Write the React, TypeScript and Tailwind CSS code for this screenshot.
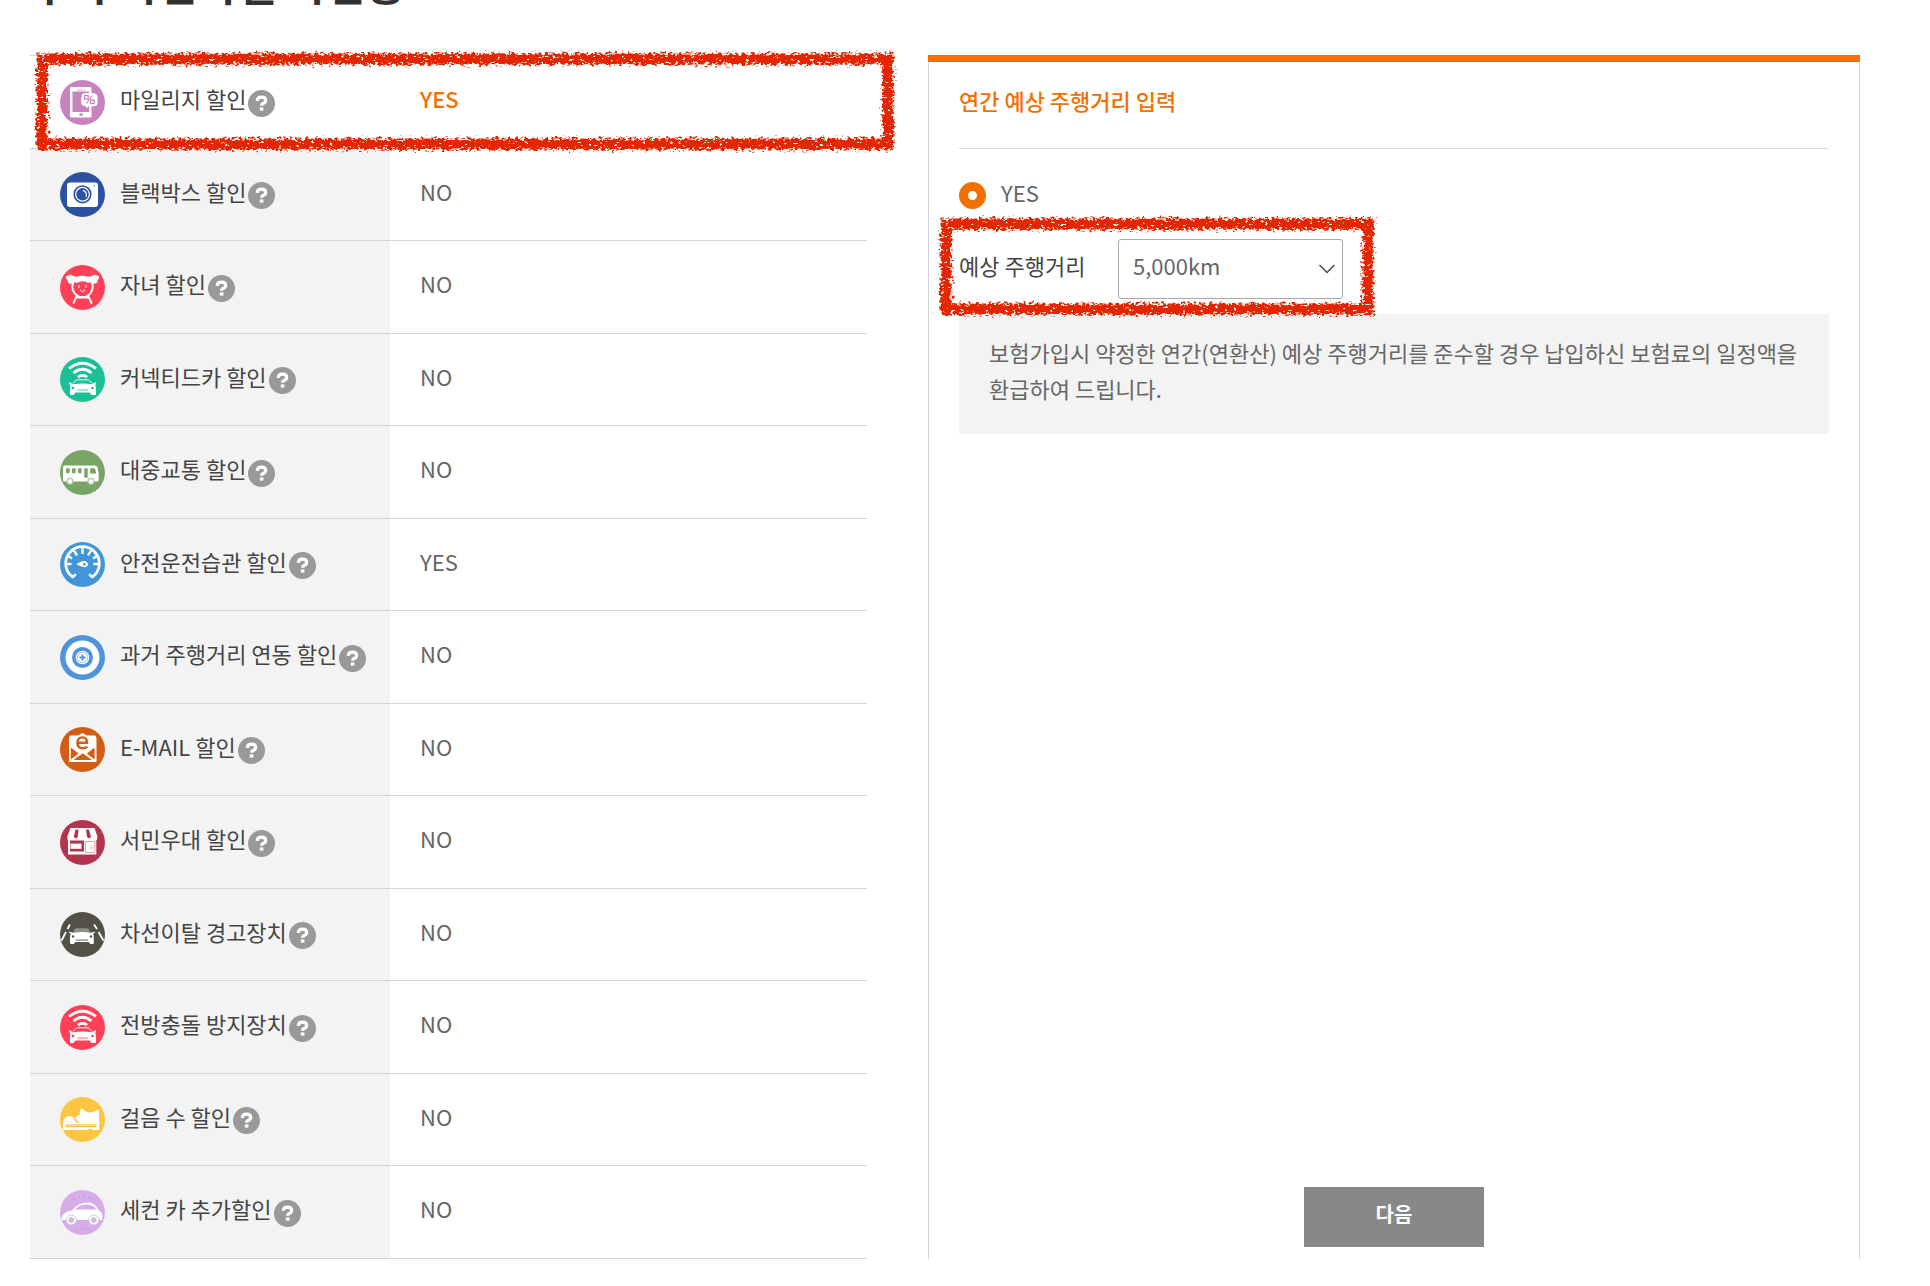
import { useId, useState } from "react";
import type { ReactNode } from "react";
import { ChevronDown } from "lucide-react";

type Discount = {
  key: string;
  label: string;
  value: "YES" | "NO";
  icon: ReactNode;
};

// front view of a car, shared by a few of the badges
const CarFront = ({ fill, bg }: { fill: string; bg: string }) => (
  <>
    <path d="M13 26.5 L15.8 23.4 Q16.4 22.8 17.4 22.8 H27.6 Q28.6 22.8 29.2 23.4 L32 26.5" fill="none" stroke={fill} strokeWidth="1" />
    <path d="M9.5 25 L13 27.2 Q22.5 25.6 32 27.2 L35.5 25 L36 27 L35 28 Q36 29 36 31 V37 Q36 38 35 38 H32 Q31 38 30.6 37 L29.8 35.4 H15.2 L14.4 37 Q14 38 13 38 H11 Q10 38 10 37 V31 Q10 29 10.5 28 L9 27Z" fill={fill} />
    <circle cx="13" cy="31" r="1.3" fill={bg} />
    <circle cx="32.5" cy="31" r="1.3" fill={bg} />
    <path d="M17.5 33 H28" stroke={bg} strokeWidth="0.8" />
  </>
);

const Wifi = () => (
  <g fill="none" stroke="#fff" strokeWidth="2.8">
    <path d="M9 11.5 Q22.5 1 36 11.5" />
    <path d="M13.5 16 Q22.5 8.5 31.5 16" />
    <path d="M18 20.2 Q22.5 16.5 27 20.2" />
  </g>
);

const discounts: Discount[] = [
  {
    key: "mileage",
    label: "마일리지 할인",
    value: "YES",
    icon: (
      <>
        <circle cx="22.5" cy="22.5" r="22.5" fill="#c883bf" />
        <path d="M10 8.5 Q10 7 11.5 7 H30 Q31.5 7 31.5 8.5 V36 Q31.5 37.5 30 37.5 H11.5 Q10 37.5 10 36Z M12.5 11.5 V32 H29 V11.5Z" fill="#fff" fillRule="evenodd" />
        <path d="M17 10 H25" stroke="#e3bfdf" strokeWidth="1.4" />
        <rect x="19.5" y="33.2" width="3" height="2.6" fill="#c883bf" />
        <path d="M22 14 Q26 12.5 30 13.2 Q37.5 12.5 37.5 17 V23 Q37.5 26.5 33 26.2 H28.5 L26.5 28.5 L25.5 26 Q21 26 21 22Z" fill="#fff" />
        <g fill="none" stroke="#c883bf" strokeWidth="1.2">
          <rect x="24.5" y="15.5" width="3.6" height="3.6" />
          <rect x="30.5" y="20" width="3.6" height="3.6" />
          <path d="M32 15.5 L26.5 23.5" />
        </g>
      </>
    ),
  },
  {
    key: "blackbox",
    label: "블랙박스 할인",
    value: "NO",
    icon: (
      <>
        <circle cx="22.5" cy="22.5" r="22.5" fill="#2b51a0" />
        <rect x="7" y="10.5" width="31" height="24.5" rx="3" fill="#fff" />
        <circle cx="22.5" cy="22.3" r="8.3" fill="#fff" stroke="#2b51a0" strokeWidth="1.6" />
        <circle cx="22.5" cy="22.3" r="6.2" fill="#2b51a0" />
        <path d="M23 18.4 Q27.6 20 26 25" fill="none" stroke="#fff" strokeWidth="1.2" />
        <circle cx="34.5" cy="13.6" r="0.7" fill="#2b51a0" />
      </>
    ),
  },
  {
    key: "child",
    label: "자녀 할인",
    value: "NO",
    icon: (
      <>
        <circle cx="22.5" cy="22.5" r="22.5" fill="#ff4057" />
        <circle cx="22.5" cy="21.8" r="10.2" fill="none" stroke="#fff" strokeWidth="1.8" />
        <path d="M6 13 Q5.5 10.5 8.5 10.5 Q11 8.8 13 11 Q16.5 12 19 11.5 Q22.5 10 26 11.5 Q29 12 32 11 Q34 8.8 36.5 10.5 Q39.5 10.5 39 13 Q38.5 14.5 37.5 15 Q37.5 19 34 18.8 Q32 18.5 31.5 16.8 Q28 18.5 25.5 16.8 Q22.5 15.5 19.5 16.8 Q17 18.5 13.5 16.8 Q13 18.5 11 18.8 Q7.5 19 7.5 15 Q6.5 14.5 6 13Z" fill="#fff" />
        <g stroke="#fff" strokeWidth="1" fill="none" strokeLinecap="round">
          <path d="M19 20.5 V22.5" />
          <path d="M25.8 20.5 V22.5" />
          <path d="M20.3 25 L22.5 26.8 L24.7 25" />
        </g>
        <path d="M16.5 31.5 L13.5 38 M28.5 31.5 L31.5 38 M16 32.6 H29" stroke="#fff" strokeWidth="1.8" strokeLinecap="round" />
      </>
    ),
  },
  {
    key: "connected",
    label: "커넥티드카 할인",
    value: "NO",
    icon: (
      <>
        <circle cx="22.5" cy="22.5" r="22.5" fill="#1bc097" />
        <Wifi />
        <CarFront fill="#fff" bg="#1bc097" />
      </>
    ),
  },
  {
    key: "transit",
    label: "대중교통 할인",
    value: "NO",
    icon: (
      <>
        <circle cx="22.5" cy="22.5" r="22.5" fill="#78a566" />
        <path d="M3 17.5 Q3 15.5 5 15.5 H34.5 Q37 15.5 37.5 17.5 L38.7 23.5 V30 Q38.7 31.5 37 31.5 H4.5 Q3 31.5 3 30Z" fill="#fff" />
        <g fill="#78a566">
          <rect x="6" y="18.3" width="3.6" height="5" rx="1" />
          <rect x="12" y="18.3" width="3.6" height="5" rx="1" />
          <rect x="18" y="18.3" width="3.6" height="5" rx="1" />
          <rect x="24.3" y="18.3" width="3.4" height="9.5" rx="0.6" />
          <path d="M30.2 18.3 H34 Q35 18.3 35.3 19.5 L36.2 23.5 H30.2Z" />
        </g>
        <circle cx="10" cy="31.3" r="3" fill="#fff" stroke="#a9c49f" strokeWidth="1.2" />
        <circle cx="31" cy="31.3" r="3" fill="#fff" stroke="#a9c49f" strokeWidth="1.2" />
      </>
    ),
  },
  {
    key: "safe",
    label: "안전운전습관 할인",
    value: "YES",
    icon: (
      <>
        <circle cx="22.5" cy="22.5" r="22.5" fill="#4295d8" />
        <path d="M15 33 L12.5 35 A16.8 16.8 0 1 1 32.5 35 L30 33" fill="none" stroke="#fff" strokeWidth="2.8" strokeLinecap="round" strokeLinejoin="round" />
        <g stroke="#fff" strokeWidth="2.4">
          <path d="M22.5 5 V12" />
          <path d="M14 8.5 L17 13.5" />
          <path d="M31 8.5 L28 13.5" />
          <path d="M7.5 13.5 L12 16.5" />
          <path d="M37.5 13.5 L33 16.5" />
          <path d="M5 22 H11.5" />
          <path d="M40 22 H33.5" />
        </g>
        <path d="M16.5 22.3 Q22 18.5 25.5 19.2 Q28 20 28 22.3 Q28 24.5 25.5 25.2 Q22 25.8 16.5 22.3Z" fill="#fff" />
        <circle cx="24.3" cy="22.3" r="1.3" fill="#4295d8" />
      </>
    ),
  },
  {
    key: "history",
    label: "과거 주행거리 연동 할인",
    value: "NO",
    icon: (
      <>
        <circle cx="22.5" cy="22.5" r="22.5" fill="#4f93dc" />
        <circle cx="22.5" cy="22.5" r="17" fill="#fff" />
        <circle cx="22.5" cy="22.5" r="10.5" fill="#4f93dc" />
        <circle cx="22.5" cy="22.5" r="6.8" fill="#fff" />
        <circle cx="22.5" cy="22.5" r="5.2" fill="none" stroke="#b9cbe0" strokeWidth="1.2" />
        <path d="M22.5 19.5 V25.5 M19.5 22.5 H25.5" stroke="#4f93dc" strokeWidth="1.8" />
      </>
    ),
  },
  {
    key: "email",
    label: "E-MAIL 할인",
    value: "NO",
    icon: (
      <>
        <circle cx="22.5" cy="22.5" r="22.5" fill="#d45d16" />
        <path d="M9 13.5 Q9 8.5 10.5 8.5 H18 L22.5 6 L27 8.5 H35 Q36.5 8.5 36.5 13.5 V35 H9Z" fill="#fff" />
        <path d="M10.8 20.5 L18.6 26.5 L10.8 32.5Z M34.6 20.5 L26.8 26.5 L34.6 32.5Z M13.5 33 L22.7 26.3 L32 33Z" fill="#d45d16" />
        <path d="M18.3 15.8 H27 Q27 10.4 22.6 10.4 Q17.4 10.4 17.4 16 Q17.4 21.2 22.8 21.2 Q25.5 21.2 27.4 19.6" fill="none" stroke="#d45d16" strokeWidth="2.4" />
      </>
    ),
  },
  {
    key: "welfare",
    label: "서민우대 할인",
    value: "NO",
    icon: (
      <>
        <circle cx="22.5" cy="22.5" r="22.5" fill="#b3344d" />
        <path d="M10.5 8 H34.5 L37.3 16 Q37.3 20 36.3 20.5 V34.5 H8 V20.5 Q7.3 20 7.5 16Z" fill="#fff" />
        <path d="M15.5 9.5 H18.5 L17.8 17 Q16 19.5 13.8 17Z M26 9.5 H29 L31 17 Q28.8 19.5 27 17Z" fill="#b3344d" />
        <path d="M10 20.5 H24 V31.5 H10Z" fill="#b3344d" />
        <rect x="10.5" y="23.6" width="11" height="5.2" fill="#fff" />
        <path d="M25.5 21.5 H34.8 V32.5 H25.5Z" fill="none" stroke="#dd9ba8" strokeWidth="0.9" />
        <path d="M29.8 25.5 H33.5 V29 H29.8Z" fill="#f3dde1" />
      </>
    ),
  },
  {
    key: "lane",
    label: "차선이탈 경고장치",
    value: "NO",
    icon: (
      <>
        <circle cx="22.5" cy="22.5" r="22.5" fill="#535047" />
        <path d="M14.5 17.5 Q15 16.3 16.5 16.3 H27 Q28.5 16.3 29 17.5 L30.5 20.5 H13Z" fill="#8f8d87" />
        <path d="M9 19.5 L13 20.8 Q22 19 30.8 20.8 L35 19.5 L34.6 21 L33 21.8 Q33.8 23 33.8 25 V31 Q33.8 32 32.8 32 H30.4 Q29.6 32 29 30 H15 Q14.4 32 13.6 32 H11 Q10 32 10 31 V25 Q10 23 11 21.8 L9.4 21Z" fill="#fff" />
        <path d="M15.5 27.3 H28.5 L27.5 29 H16.5Z" fill="#a5a39e" />
        <circle cx="13" cy="24.5" r="1.2" fill="#535047" />
        <circle cx="31" cy="24.5" r="1.2" fill="#535047" />
        <path d="M10 12.5 L7.5 17 M6 20 L1.5 28.5 M34 12.5 L37 17 M38.5 20 L43.5 28.5" stroke="#fff" strokeWidth="1.8" />
      </>
    ),
  },
  {
    key: "collision",
    label: "전방충돌 방지장치",
    value: "NO",
    icon: (
      <>
        <circle cx="22.5" cy="22.5" r="22.5" fill="#ff4057" />
        <Wifi />
        <CarFront fill="#fff" bg="#ff4057" />
      </>
    ),
  },
  {
    key: "walk",
    label: "걸음 수 할인",
    value: "NO",
    icon: (
      <>
        <circle cx="22.5" cy="22.5" r="22.5" fill="#fec541" />
        <path d="M3 33 V26 Q3.5 19.5 9 19 Q13 18.5 14 21.5 Q15 26 19.5 26.5 L17.5 23.5 L14.8 21 L18 18 L20.5 17.5 L19.5 15 L21.5 11 L24.5 13.5 Q29 17.5 36 13.5 L38.7 12.5 Q39.2 20 39.2 27 V33Z" fill="#fff" />
        <path d="M5.5 27.8 H36.5" fill="none" stroke="#fec541" strokeWidth="1.6" strokeDasharray="1.2 0.7" />
        <path d="M5.5 29.4 H36.5" stroke="#fec541" strokeWidth="1.8" />
        <path d="M26 33 L31.5 31.8 L32.5 33Z" fill="#fec541" />
      </>
    ),
  },
  {
    key: "second",
    label: "세컨 카 추가할인",
    value: "NO",
    icon: (
      <>
        <circle cx="22.5" cy="22.5" r="22.5" fill="#d6ade7" />
        <g fill="#c287d8">
          <circle cx="10" cy="12" r="0.7" />
          <circle cx="14" cy="8.5" r="0.7" />
          <circle cx="19" cy="7" r="0.7" />
          <circle cx="24" cy="6.5" r="0.7" />
          <circle cx="29" cy="8" r="0.7" />
          <circle cx="34" cy="9.5" r="0.7" />
          <circle cx="16" cy="40.5" r="0.7" />
          <circle cx="21.5" cy="38.5" r="0.7" />
          <circle cx="26" cy="39.5" r="0.7" />
          <circle cx="30.5" cy="41" r="0.7" />
        </g>
        <path d="M1.5 28 Q3 21.5 12 20.5 Q18 12.5 28 12.5 Q35 12.8 39 20.5 Q42 22 42.3 25.5 V30 H1.5Z" fill="#fff" />
        <path d="M15 19.5 Q19.5 14.5 26.5 14.5 Q33.5 14.5 36.5 19.5Z" fill="#d6ade7" />
        <circle cx="11.3" cy="30" r="5" fill="#fff" stroke="#c9c1cf" strokeWidth="0.9" />
        <circle cx="33.8" cy="30" r="5" fill="#fff" stroke="#c9c1cf" strokeWidth="0.9" />
        <circle cx="11.3" cy="30" r="2.8" fill="#cbb9d6" />
        <circle cx="33.8" cy="30" r="2.8" fill="#cbb9d6" />
      </>
    ),
  },
];

const distances = ["3,000km", "5,000km", "10,000km", "15,000km"];

// hand drawn crayon frame, fills its positioned parent
function CrayonFrame() {
  const id = useId();
  return (
    <svg className="h-full w-full overflow-visible" aria-hidden="true">
      <filter id={id} filterUnits="userSpaceOnUse" x="-20" y="-20" width="115%" height="160%" colorInterpolationFilters="sRGB">
        <feTurbulence type="fractalNoise" baseFrequency="0.3 0.4" numOctaves="2" seed="4" result="noise" />
        <feDisplacementMap in="SourceGraphic" in2="noise" scale="11" xChannelSelector="R" yChannelSelector="G" result="rough" />
        <feTurbulence type="fractalNoise" baseFrequency="0.22 0.35" numOctaves="2" seed="11" />
        <feColorMatrix values="0 0 0 0 0  0 0 0 0 0  0 0 0 0 0  12 0 0 0 -8" result="holes" />
        <feComposite in="rough" in2="holes" operator="out" />
      </filter>
      <rect width="100%" height="100%" fill="none" stroke="#e42600" strokeWidth="11" filter={`url(#${id})`} />
    </svg>
  );
}

function HelpButton({ label }: { label: string }) {
  return (
    <button type="button" aria-label={`${label} 도움말`} className="ml-0.5 mt-0.5 shrink-0">
      <svg width="27" height="27" viewBox="0 0 27 27">
        <circle cx="13.5" cy="13.5" r="13.5" fill="#999" />
        <path d="M9.2 10.8 Q9.4 7.2 13.5 7.2 Q17.7 7.2 17.7 10.4 Q17.7 12.3 15.6 13.2 Q13.6 14 13.6 15.8" fill="none" stroke="#fff" strokeWidth="3.2" />
        <rect x="11.8" y="17.4" width="3.6" height="3.2" fill="#fff" />
      </svg>
    </button>
  );
}

export default function App() {
  const [distance, setDistance] = useState("5,000km");
  const [active, setActive] = useState("mileage");

  return (
    <main className="overflow-hidden bg-white pl-[30px] pr-[70px] font-['Noto_Sans_CJK_KR','Noto_Sans',sans-serif] text-[22px] leading-9 text-[#444]">
      <header className="flex h-[55px] items-start">
        <h1 className="-mt-11 text-[43px] font-bold leading-[52px] text-[#333]">
          추가 가입하실 가입용
        </h1>
      </header>

      <div className="grid grid-cols-[837fr_932fr] gap-[61px]">
        {/* Discount list */}
        <section className="relative">
          <table className="w-full border-collapse border-t border-[#d5d5d5]">
            <tbody>
              {discounts.map((item) => {
                const on = item.key === active;
                return (
                  <tr
                    key={item.key}
                    onClick={() => setActive(item.key)}
                    className="border-b border-[#d5d5d5] odd:h-[93px] even:h-[92px]"
                  >
                    <th
                      scope="row"
                      className={`w-[360px] pl-[30px] text-left font-normal ${on ? "bg-white" : "bg-[#f3f3f3]"}`}
                    >
                      <div className="flex items-center">
                        <svg width="45" height="45" viewBox="0 0 45 45" className="mr-[15px] shrink-0" aria-hidden="true">
                          {item.icon}
                        </svg>
                        <span className="whitespace-nowrap pb-2">{item.label}</span>
                        <HelpButton label={item.label} />
                      </div>
                    </th>
                    <td className={`pb-2 pl-[30px] ${on ? "font-medium text-[#f37000]" : "text-[#666]"}`}>
                      {item.value}
                    </td>
                  </tr>
                );
              })}
            </tbody>
          </table>
          <div className="pointer-events-none absolute -right-[21px] left-3 top-1 h-[85px]">
            <CrayonFrame />
          </div>
        </section>

        {/* Detail panel */}
        <section className="flex flex-col">
          <div className="h-[7px] bg-[#f37000]" />
          <div className="flex flex-1 flex-col border-x border-[#d5d5d5] px-[30px]">
            <h2 className="border-b border-[#ddd] pb-[30px] pt-5 font-medium text-[#f37000]">
              연간 예상 주행거리 입력
            </h2>

            <div className="mt-[33px] flex h-[27px] items-center text-[#666]">
              <input
                type="radio"
                id="mileage-yes"
                name="mileage"
                defaultChecked
                className="h-[27px] w-[27px] appearance-none rounded-full border-[9px] border-[#f37000] bg-white"
              />
              <label htmlFor="mileage-yes" className="pb-2 pl-[15px]">
                YES
              </label>
            </div>

            <div className="relative mt-[30px] flex items-center self-start">
              <label htmlFor="distance" className="w-[159px] pb-2">
                예상 주행거리
              </label>
              <div className="relative">
                <select
                  id="distance"
                  value={distance}
                  onChange={(e) => setDistance(e.target.value)}
                  className="h-[60px] w-[225px] appearance-none rounded-[3px] border border-[#aaa] bg-white pb-2 pl-3.5 text-[#666]"
                >
                  {distances.map((d) => (
                    <option key={d}>{d}</option>
                  ))}
                </select>
                <ChevronDown className="pointer-events-none absolute right-0.5 top-4 h-7 w-7 text-[#555]" strokeWidth={1.5} />
              </div>
              <div className="pointer-events-none absolute -left-[13px] -right-[25px] -top-[15px] h-[85px]">
                <CrayonFrame />
              </div>
            </div>

            <p className="mt-[15px] bg-[#f3f3f3] px-[30px] pb-7 pt-5 text-[#666]">
              보험가입시 약정한 연간(연환산) 예상 주행거리를 준수할 경우 납입하신 보험료의 일정액을
              환급하여 드립니다.
            </p>

            <button type="button" className="mx-auto mb-3 mt-auto h-[60px] w-[180px] bg-[#888] pb-1.5 text-[20px] font-bold text-white">
              다음
            </button>
          </div>
        </section>
      </div>
    </main>
  );
}
